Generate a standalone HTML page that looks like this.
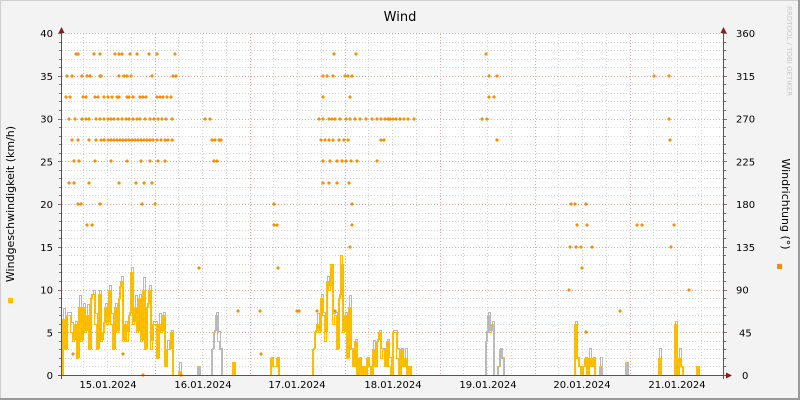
<!DOCTYPE html>
<html><head><meta charset="utf-8"><style>
html,body{margin:0;padding:0;background:#f3f3f3}
svg{display:block}
text{font-family:"DejaVu Sans","Liberation Sans",sans-serif}
</style></head><body>
<svg id="s" width="800" height="400" xmlns="http://www.w3.org/2000/svg">
<rect x="0" y="0" width="800" height="400" fill="#f3f3f3"/>
<path d="M0.5 400V0.5H800" stroke="#cfcfcf" fill="none" stroke-width="1"/>
<path d="M799 0V399H0" stroke="#9a9a9a" fill="none" stroke-width="2"/>
<rect x="61" y="33" width="663" height="342" fill="#ffffff"/>
<g id="grid"></g>
<g id="data"></g>
<g id="axes">
<line x1="61.5" y1="30" x2="61.5" y2="379" stroke="#555"/>
<line x1="723.5" y1="30" x2="723.5" y2="379" stroke="#555"/>
<line x1="58" y1="375.5" x2="728" y2="375.5" stroke="#555"/>
<path d="M58.5 33L61.5 27L64.5 33Z" fill="#8b1a1a"/>
<path d="M720.5 33L723.5 27L726.5 33Z" fill="#8b1a1a"/>
<path d="M726 372.5L732 375.5L726 378.5Z" fill="#8b1a1a"/>
</g>
<text x="400" y="21" font-size="13" text-anchor="middle" fill="#000">Wind</text>
<g font-size="10" fill="#000" text-anchor="end" id="ly"></g>
<g font-size="10" fill="#000" text-anchor="start" id="ry"></g>
<g font-size="10" fill="#000" text-anchor="middle">
<text x="108" y="388">15.01.2024</text><text x="203" y="388">16.01.2024</text>
<text x="297" y="388">17.01.2024</text><text x="393" y="388">18.01.2024</text>
<text x="488" y="388">19.01.2024</text><text x="582" y="388">20.01.2024</text>
<text x="677" y="388">21.01.2024</text>
</g>
<text transform="translate(14,204) rotate(-90)" font-size="11" text-anchor="middle">Windgeschwindigkeit (km/h)</text>
<rect x="8" y="298" width="5" height="5" fill="#ffc000"/>
<text transform="translate(782,204) rotate(90)" font-size="11" text-anchor="middle">Windrichtung (°)</text>
<rect x="777" y="264" width="5" height="5" fill="#ff8c00"/>
<text transform="translate(787,6) rotate(90)" font-size="7" fill="#c8c8c8">RRDTOOL / TOBI OETIKER</text>
</svg>
<script>
var NS="http://www.w3.org/2000/svg";
function el(p,t,a,txt){var e=document.createElementNS(NS,t);for(var k in a)e.setAttribute(k,a[k]);if(txt!==undefined)e.textContent=txt;p.appendChild(e);return e;}
var g=document.getElementById('grid');
function Y(v){return 375-v*8.55;}
for(var v=1;v<40;v++){if(v%5==0)continue;var y=Math.round(Y(v))+0.5;el(g,'line',{x1:62,x2:723,y1:y,y2:y,stroke:'#d6d6d6','stroke-dasharray':'1,2'});}
for(var k=-4;k<30;k++){var x=154.5+k*23.75;if(x<63||x>722)continue;if(k%4==0)continue;x=Math.round(x)+0.5;el(g,'line',{x1:x,x2:x,y1:34,y2:375,stroke:'#d6d6d6','stroke-dasharray':'1,2'});}
for(var v=5;v<=40;v+=5){var y=Math.round(Y(v))+0.5;el(g,'line',{x1:62,x2:723,y1:y,y2:y,stroke:'#e6a8a8','stroke-dasharray':'1,2'});}
for(var k=0;k<6;k++){var x=Math.round(154.5+k*95)+0.5;el(g,'line',{x1:x,x2:x,y1:34,y2:375,stroke:'#e6a8a8','stroke-dasharray':'1,2'});}
for(var v=0;v<=40;v++){var y=Math.round(Y(v))+0.5;var l=v%5==0?3:2;el(g,'line',{x1:61-l,x2:61,y1:y,y2:y,stroke:'#777'});el(g,'line',{x1:724,x2:724+l,y1:y,y2:y,stroke:'#777'});}
var ly=document.getElementById('ly'),ry=document.getElementById('ry');
for(var v=0;v<=40;v+=5){el(ly,'text',{x:53,y:Y(v)+4},String(v));el(ry,'text',{x:v==0?742:(v<=5?739:736),y:Y(v)+4},String(v*9));}
var d=document.getElementById('data');
var raw=[[62,6.5],[64,3],[66,7],[68,7],[70,5],[72,4],[74,6],[76,2],[78,8],[80,4],[82,8],[84,5],[86,7],[88,3],[90,9],[92,9.5],[94,6],[96,3],[98,9.5],[100,4],[102,5],[104,8],[106,6],[108,10],[110,6],[112,3],[114,8],[116,5],[118,9],[120,11],[122,4],[124,6],[126,4],[128,7],[130,12],[132,6],[134,8],[136,5],[138,9],[140,4],[142,10],[144,3],[146,8],[148,10],[150,3],[152,6],[154,6],[156,2],[158,6],[160,5],[162,7],[164,1],[166,3],[168,3],[170,5],[172,0],[178,0.5],[180,0],[197,1],[199,0],[210,0],[211,3],[213,5],[215,7],[217,4],[219,3],[221,0],[232,1.5],[234,0],[270,2],[272,1],[276,2],[278,0],[310,0],[312,3],[314,5],[316,6],[318,5],[320,9],[322,7],[324,4],[326,11],[328,10],[330,13],[332,6],[334,7],[336,3],[338,9],[340,14],[342,5],[344,7],[346,2],[348,8],[350,3],[352,1],[354,4],[356,0],[358,2],[360,0],[362,1],[364,0],[366,2],[368,1],[370,0],[372,3],[374,1],[376,4],[378,5],[380,2],[382,3],[384,1],[386,4],[388,1],[390,0],[392,5],[394,5],[396,2],[398,0],[400,3],[402,1],[404,2],[406,0],[408,1],[410,0],[485,4],[487,7],[489,5],[491,6],[493,0],[497,1],[499,3],[501,2],[503,0],[574,6],[576,2],[578,1],[580,0],[582,1],[584,2],[586,0],[588,2],[590,1],[592,2],[594,0],[599,1],[601,0],[625,1.5],[627,0],[658,2],[660,0],[674,6],[676,0],[678,2],[680,1],[682,0],[696,1],[698,0]];
function stepPath(arr,dx){var p='M62 375.5';for(var i=0;i<arr.length;i++){var x=arr[i][0]+dx+0.5,v=arr[i][1];p+='H'+x+'V'+(Math.round(Y(v))+0.5);}p+='H723';return p;}
var grayArr=raw.map(function(a,i){return [a[0],a[1]>0?Math.min(13,a[1]*1.05+(i%4==0?1:0)):0];});
el(d,'path',{d:stepPath(grayArr,1),fill:'none',stroke:'#b8b8b8','stroke-width':1});
el(d,'path',{d:stepPath(raw,0),fill:'none',stroke:'#ffbf00','stroke-width':1});
var rows={37.5:[76,78,94,100,115,119,122,130,137,149,157,175,334,356,486],
35:[67,72,82,87,90,100,101,119,124,127,131,152,173,176,323,327,333,345,348,352,489,497,654,669],
32.5:[66,70,83,86,95,98,104,108,112,117,119,127,129,133,140,143,146,157,160,163,167,171,323,350,489,494],
30:[69,75,82,86,89,96,100,104,108,111,114,118,122,126,129,133,137,140,145,150,154,158,162,166,172,205,210,319,323,329,332,335,340,346,350,355,360,366,372,377,381,385,388,390,393,396,400,404,408,414,482,487,669],
27.5:[72,78,89,96,101,104,108,111,114,117,120,123,126,129,132,135,138,141,144,147,150,153,157,161,165,168,172,212,215,219,221,321,325,329,333,339,344,348,381,384,497,670],
25:[74,79,95,111,127,141,150,158,165,214,217,323,330,337,342,346,351,357,377],
22.5:[69,74,89,119,136,144,152,323,329,337,349],
20:[78,81,100,142,155,274,352,571,575,586],
17.5:[87,92,274,277,352,577,587,637,642,674],
15:[350,570,576,581,592,671],
12.5:[199,278,582],10:[569,689],7.5:[238,260,297,299,317,335,620],5:[586],2.5:[73,123,261],0:[143,181]};
var pp='';for(var k in rows){var y=Math.round(Y(parseFloat(k)));rows[k].forEach(function(x){pp+='M'+(x-2)+' '+y+'l2 -2l2 2l-2 2z';});}
el(d,'path',{d:pp,fill:'#ff8c00'});
</script>
</body></html>
